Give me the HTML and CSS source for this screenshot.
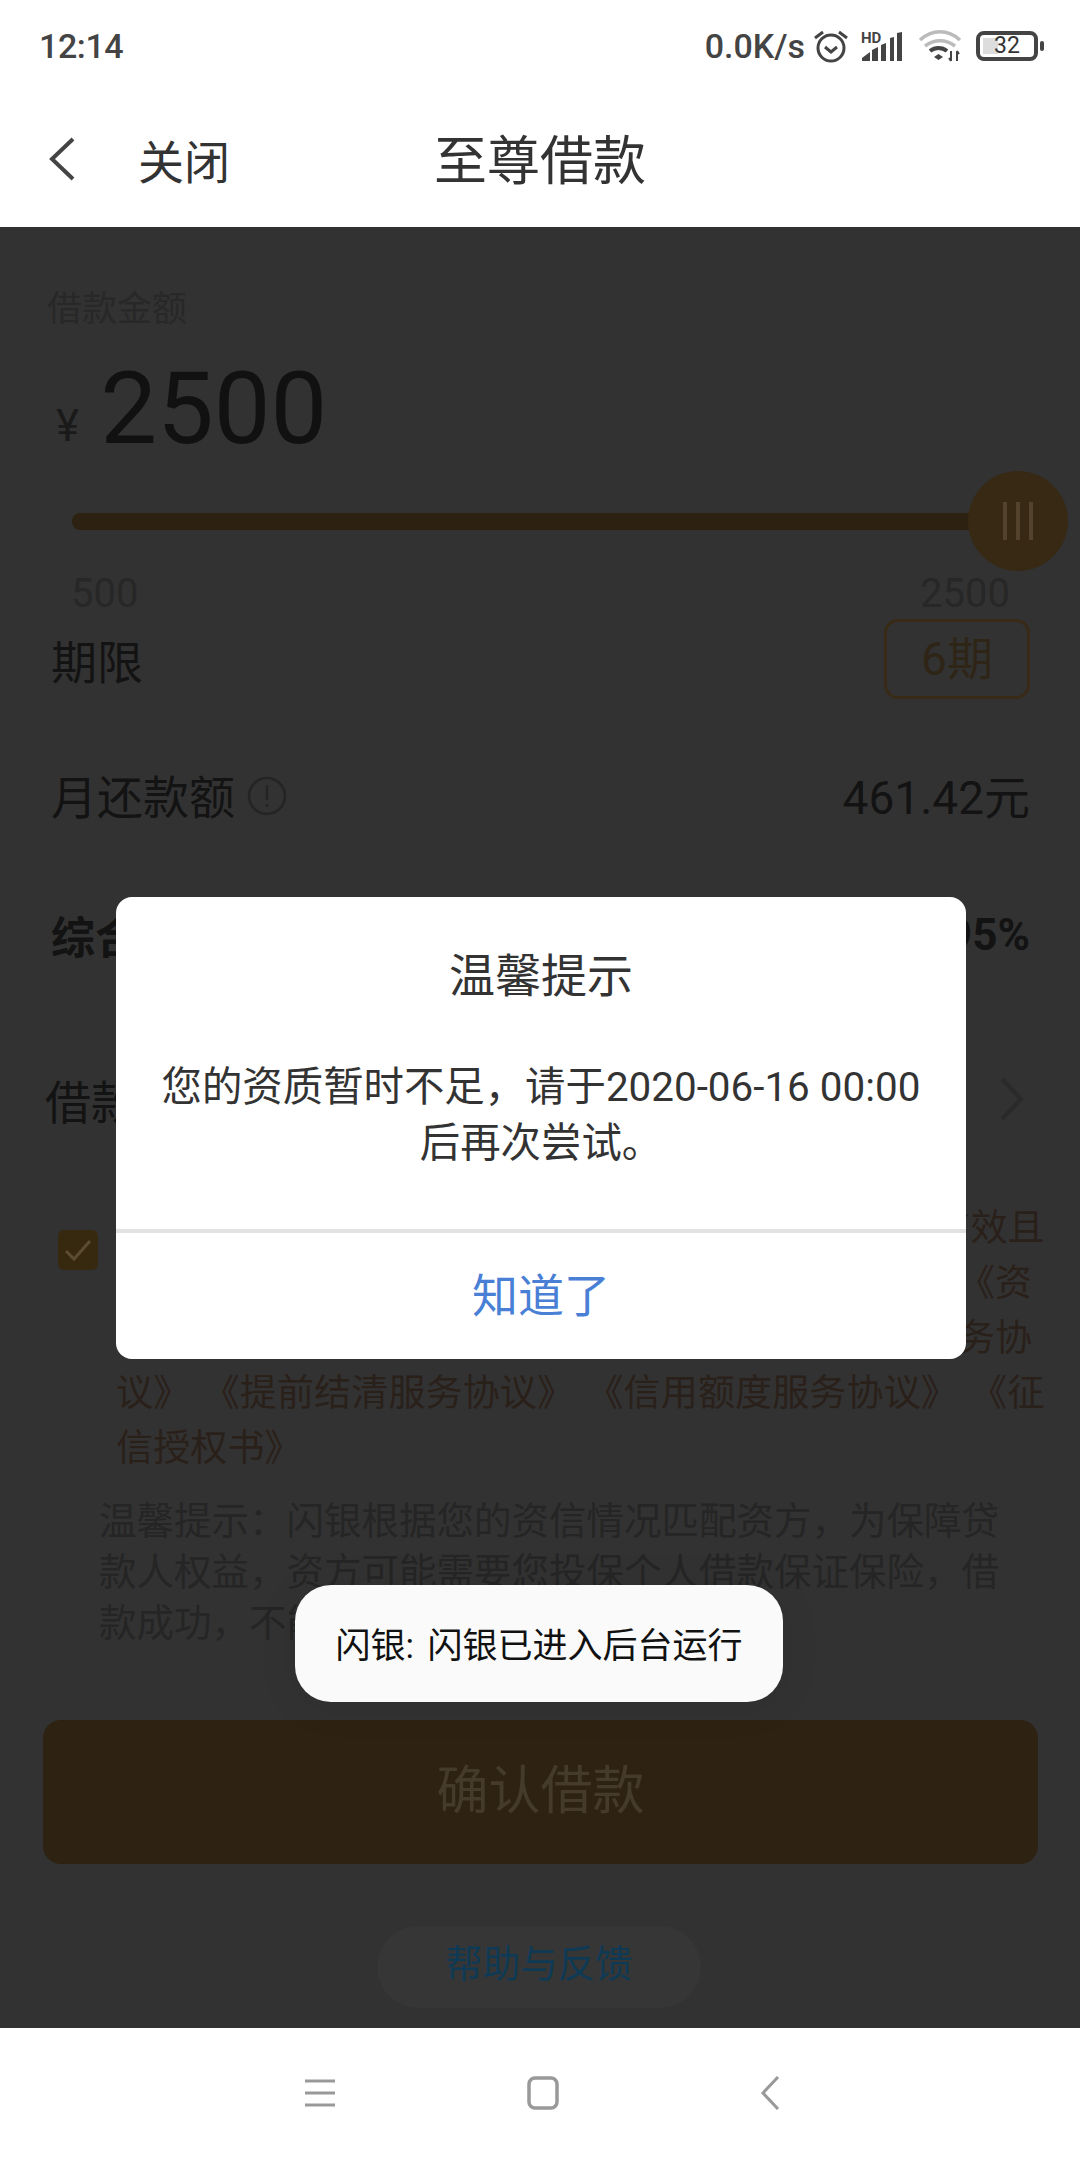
FILE: index.html
```html
<!DOCTYPE html>
<html lang="zh-CN">
<head>
  <meta charset="UTF-8">
  <meta name="viewport" content="width=device-width, initial-scale=1.0">
  <title>至尊借款</title>
  <link rel="stylesheet" href="styles.css">
</head>
<body>
  <div class="page">
    <div class="status">
      <span class="clock">12:14</span>
      <div class="status-right">
        <span class="speed">0.0K/s</span>
        <svg class="alarm" width="36" height="34" viewBox="0 0 36 34"><circle cx="18" cy="19" r="13" fill="none" stroke="#444" stroke-width="3"/><path d="M12 18l6 5 6-5" fill="none" stroke="#444" stroke-width="3"/><path d="M2 9l8-6M34 9l-8-6" stroke="#444" stroke-width="3"/></svg>
        <svg class="signal" width="42" height="32" viewBox="0 0 42 32"><text x="1" y="13" class="hd">HD</text><path d="M2 31v-3l8-6v9zM12 31V20l6-3v14zM21 31V15l5-2v18zM30 31V8l4-1v24zM37 31V3l5-1v29z" fill="#444"/></svg>
        <svg class="wifi" width="44" height="32" viewBox="0 0 44 32"><path d="M2 10c12-11 28-11 40 0" fill="none" stroke="#bbb" stroke-width="3.5"/><path d="M7 16c9-7 21-7 30 0" fill="none" stroke="#bbb" stroke-width="3.5"/><path d="M12 21c5-4 12-4 17 0" fill="none" stroke="#444" stroke-width="4"/><path d="M16 27l4.500-3 4.500 3-4.500 3z" fill="#444"/><path d="M33 21v10M31 28l2 3M39 21v10M39 21l2 3" fill="none" stroke="#444" stroke-width="2"/></svg>
        <div class="battery">
          <div class="battery-body"><span class="battery-level"></span><span class="battery-num">32</span></div>
          <span class="battery-nub"></span>
        </div>
      </div>
    </div>

    <div class="header">
      <svg class="back" width="28" height="46" viewBox="0 0 28 46"><path d="M25 3L4 23l21 20" fill="none" stroke="#444" stroke-width="4"/></svg>
      <span class="close">关闭</span>
      <span class="title">至尊借款</span>
    </div>

    <div class="main">
      <div class="amount-label">借款金额</div>
      <div class="amount"><span class="yen">¥</span><span class="value">2500</span></div>

      <div class="slider">
        <div class="track"></div>
        <div class="knob"><i></i><i></i><i></i></div>
      </div>
      <div class="range"><span>500</span><span>2500</span></div>

      <div class="row term">
        <span>期限</span>
        <span class="term-tag">6期</span>
      </div>
      <div class="row repay">
        <span class="repay-label">月还款额
          <svg class="info" width="40" height="40" viewBox="0 0 40 40"><circle cx="20" cy="20" r="18" fill="none" stroke="#242424" stroke-width="2.5"/><path d="M20 9v15M20 28v3" stroke="#242424" stroke-width="2.5"/></svg>
        </span>
        <span>461.42元</span>
      </div>
      <div class="row rate">
        <span>综合年化利率</span>
        <span>23.95%</span>
      </div>
      <div class="row loan">
        <span>借款用途</span>
        <svg class="chevron" width="24" height="44" viewBox="0 0 24 44"><path d="M2 2l19 20L2 42" fill="none" stroke="#2a2a2a" stroke-width="4"/></svg>
      </div>

      <div class="agree">
        <span class="check"><svg width="28" height="24" viewBox="0 0 28 24"><path d="M2 13l8 8L26 3" fill="none" stroke="#5b4c32" stroke-width="3"/></svg></span>
        <p class="agree-text">本人已阅读并同意下列协议，确认协议内容均真实有效且<br>自愿接受其约束及《借款协议》 《担保服务协议》 《资<br>方授权书》 《个人信息查询使用授权书》 《咨询服务协<br>议》 《提前结清服务协议》 《信用额度服务协议》 《征<br>信授权书》</p>
      </div>
      <p class="tip">温馨提示：闪银根据您的资信情况匹配资方，为保障贷<br>款人权益，资方可能需要您投保个人借款保证保险，借<br>款成功，不能撤销。</p>

      <div class="confirm">确认借款</div>
      <div class="help">帮助与反馈</div>
    </div>

    <div class="navbar">
      <svg width="32" height="30" viewBox="0 0 32 30"><path d="M1 3h30M1 15h30M1 27h30" stroke="#999" stroke-width="3"/></svg>
      <svg class="nav-home" width="32" height="34" viewBox="0 0 32 34"><rect x="2" y="2" width="28" height="30" rx="6" fill="none" stroke="#999" stroke-width="3.5"/></svg>
      <svg class="nav-back" width="20" height="34" viewBox="0 0 20 34"><path d="M18 1L3 17l15 16" fill="none" stroke="#999" stroke-width="3"/></svg>
    </div>

    <div class="dialog">
      <div class="dialog-title">温馨提示</div>
      <div class="dialog-msg">您的资质暂时不足，请于2020-06-16 00:00<br>后再次尝试。</div>
      <div class="dialog-btn">知道了</div>
    </div>

    <div class="toast">闪银: 闪银已进入后台运行</div>
  </div>
</body>
</html>
```

FILE: styles.css
```css
* {
  box-sizing: border-box;
}

body {
  margin: 0;
  font-family: Roboto, "Noto Sans CJK SC", sans-serif;
  background-color: #fff;
}

.page {
  position: relative;
  width: 1080px;
  height: 2158px;
  overflow: hidden;
}

/* status bar */
.status {
  height: 90px;
  padding: 2px 36px 0 39px;
  display: flex;
  justify-content: space-between;
  align-items: center;
  color: #444;
  font-size: 34px;
  font-weight: 500;
}

.clock {
  letter-spacing: -0.4px;
}

.status-right {
  display: flex;
  align-items: center;
}

.speed {
  margin-right: 8px;
}

.alarm {
  margin-right: 11px;
}

.signal {
  margin-right: 16px;
}

.hd {
  font-family: Roboto, sans-serif;
  font-size: 15px;
  font-weight: 700;
  fill: #444;
}

.wifi {
  margin-right: 14px;
}

.battery {
  display: flex;
  align-items: center;
}

.battery-body {
  position: relative;
  width: 62px;
  height: 30px;
  border: 4px solid #444;
  border-radius: 8px;
  padding: 3px;
}

.battery-level {
  display: block;
  width: 32%;
  height: 100%;
  background-color: #ddd;
}

.battery-num {
  position: absolute;
  left: 0;
  right: 0;
  top: 0;
  line-height: 22px;
  text-align: center;
  font-size: 23px;
  font-weight: 400;
  color: #333;
}

.battery-nub {
  width: 4px;
  height: 10px;
  margin-left: 2px;
  border-radius: 2px;
  background-color: #444;
}

/* header */
.header {
  position: relative;
  height: 137px;
  padding-left: 48px;
  display: flex;
  align-items: center;
  color: #333;
}

.close {
  margin-left: 62px;
  font-size: 46px;
}

.title {
  position: absolute;
  left: 0;
  right: 0;
  padding-bottom: 3px;
  text-align: center;
  font-size: 53px;
}

/* dimmed page */
.main {
  height: 1801px;
  overflow: hidden;
  padding-top: 60px;
  background-color: #323232;
  color: #131313;
  font-size: 46px;
}

.amount-label {
  height: 46px;
  line-height: 46px;
  margin-left: 47px;
  font-size: 35px;
  color: #282828;
}

.amount {
  height: 124px;
  margin-left: 56px;
  padding-top: 28px;
  display: flex;
  align-items: center;
}

.yen {
  margin: 34px 21px 0 0;
  font-size: 44px;
  color: #1a1a1a;
}

.value {
  font-size: 101px;
  line-height: 96px;
  color: #111;
}

.slider {
  height: 100px;
  margin: 14px 12px 0 72px;
  display: flex;
  align-items: center;
}

.track {
  flex: 1;
  height: 17px;
  margin-right: -12px;
  border-radius: 8px;
  background-color: #2d2212;
}

.knob {
  width: 100px;
  height: 100px;
  border-radius: 50%;
  background-color: #372914;
  display: flex;
  justify-content: center;
  align-items: center;
  gap: 9px;
}

.knob i {
  width: 4px;
  height: 38px;
  background-color: #54432c;
}

.range {
  height: 44px;
  line-height: 46px;
  padding: 0 70px 0 71px;
  display: flex;
  justify-content: space-between;
  font-size: 40px;
  color: #272727;
}

.row {
  height: 80px;
  padding: 0 50px 0 51px;
  display: flex;
  justify-content: space-between;
  align-items: center;
}

.term {
  margin-top: 4px;
}

.term-tag {
  width: 146px;
  height: 80px;
  line-height: 74px;
  text-align: center;
  border: 3px solid #382a16;
  border-radius: 14px;
  color: #2f2517;
}

.repay {
  margin-top: 55px;
}

.repay-label {
  display: flex;
  align-items: center;
  gap: 12px;
}

.info {
  margin-top: 3px;
}

.rate {
  margin-top: 61px;
  font-size: 44px;
  font-weight: 700;
}

.loan {
  margin-top: 84px;
  padding: 0 56px 0 45px;
}

.agree {
  margin: 62px 0 0 58px;
  display: flex;
  align-items: flex-start;
}

.check {
  flex-shrink: 0;
  width: 40px;
  height: 40px;
  margin: 29px 18px 0 0;
  border-radius: 6px;
  background-color: #37290f;
  display: flex;
  justify-content: center;
  align-items: center;
}

.agree-text {
  margin: 0;
  font-size: 37px;
  letter-spacing: 0.15px;
  word-spacing: 3px;
  line-height: 55px;
  white-space: nowrap;
  color: #2a201a;
}

.tip {
  margin: 20px 0 0 99px;
  font-size: 37.500px;
  line-height: 51px;
  white-space: nowrap;
  color: #252525;
}

.confirm {
  height: 144px;
  margin: 71px 42px 0 43px;
  line-height: 144px;
  text-align: center;
  border-radius: 18px;
  background-color: #2e2312;
  font-size: 52px;
  color: #453b2c;
}

.help {
  width: 324px;
  height: 82px;
  margin: 62px 0 0 377px;
  line-height: 77px;
  text-align: center;
  border-radius: 41px;
  background-color: #363636;
  font-size: 37.500px;
  color: #0f3a55;
}

/* nav bar */
.navbar {
  height: 131px;
  padding: 0 0 2px 304px;
  display: flex;
  align-items: center;
  background-color: #fff;
}

.nav-home {
  margin-left: 191px;
}

.nav-back {
  margin-left: 201px;
}

/* dialog over the page */
.dialog {
  position: absolute;
  left: 116px;
  top: 897px;
  width: 850px;
  height: 462px;
  padding-top: 49px;
  display: flex;
  flex-direction: column;
  border-radius: 16px;
  background-color: #fff;
  text-align: center;
  color: #333;
}

.dialog-title {
  line-height: 60px;
  font-size: 46px;
}

.dialog-msg {
  margin-top: 54px;
  flex: 1;
  font-size: 40.400px;
  line-height: 56px;
}

.dialog-btn {
  height: 130px;
  line-height: 126px;
  border-top: 4px solid #e2e2e2;
  font-size: 46px;
  color: #4a7fd6;
}

.toast {
  position: absolute;
  left: 295px;
  top: 1585px;
  width: 488px;
  height: 117px;
  line-height: 123px;
  text-align: center;
  word-spacing: 5px;
  border-radius: 36px;
  background-color: #fafafa;
  box-shadow: 0 4px 40px rgba(0, 0, 0, 0.08);
  font-size: 35px;
  color: #111;
}
```
